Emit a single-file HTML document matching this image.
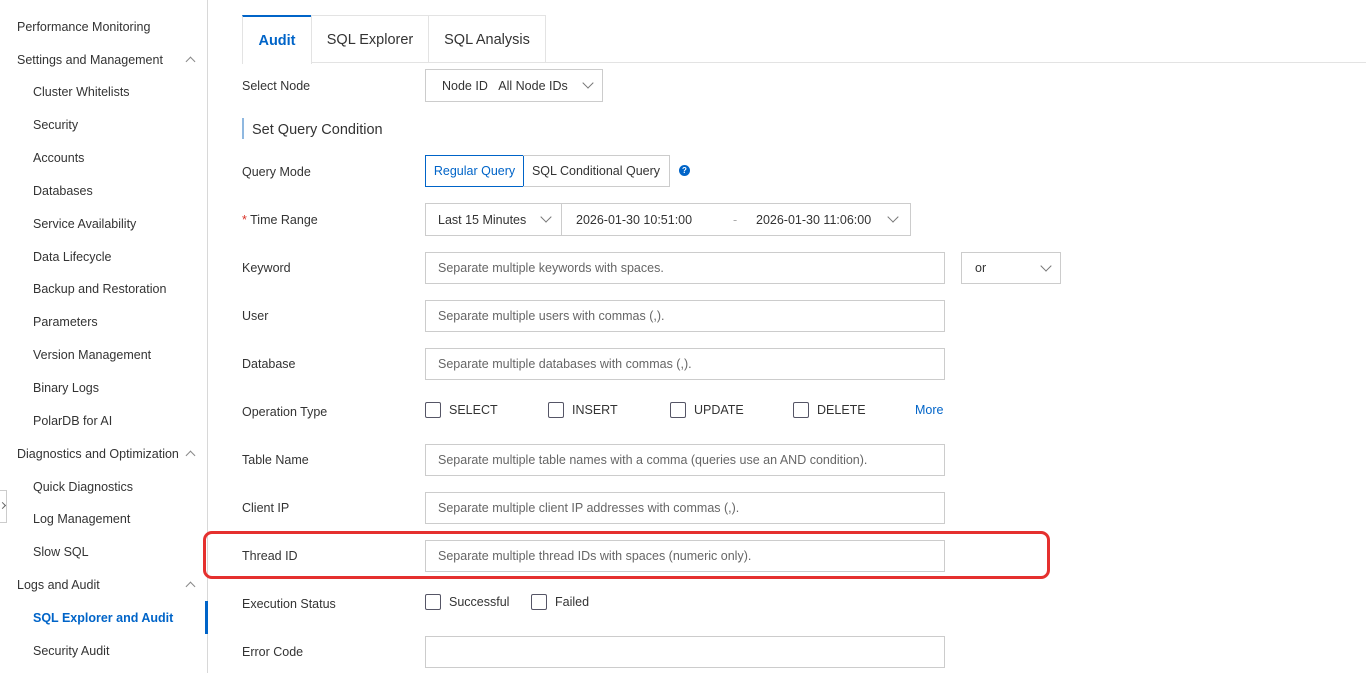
<!DOCTYPE html>
<html><head><meta charset="utf-8"><style>
*{box-sizing:border-box;margin:0;padding:0}
body{width:1366px;height:673px;overflow:hidden;background:#fff;font-family:"Liberation Sans",sans-serif;font-size:12.5px;color:#333;position:relative}
.a{position:absolute;white-space:nowrap}
.sb{position:absolute;left:0;top:0;width:208px;height:673px;border-right:1px solid #d8d8d8}
.it{position:absolute;line-height:16px;transform:translateY(-7px)}
.l1{left:17px}.l2{left:33px}
.car{position:absolute;left:187px;width:7px;height:7px;border-left:1px solid #888;border-top:1px solid #888;transform:rotate(45deg)}
.lab{position:absolute;left:242px;line-height:16px;transform:translateY(-7px)}
.inp{position:absolute;left:425px;width:520px;height:32px;border:1px solid #ccc;color:#666;padding-left:12px;line-height:31px}
.chev{display:inline-block;width:8px;height:8px;border-right:1px solid #777;border-bottom:1px solid #777;transform:rotate(45deg);position:absolute}
.cb{position:absolute;width:16px;height:16px;border:1px solid #556;border-radius:2px}
.tab{position:absolute;top:15px;height:48px;border:1px solid #e3e3e3;border-bottom:none;font-size:14.5px;line-height:48px;text-align:center;color:#333}
</style></head><body>
<div class="sb">
<div class="it l1" style="top:26px">Performance Monitoring</div>
<div class="it l1" style="top:59px">Settings and Management</div><div class="car" style="top:58px"></div>
<div class="it l2" style="top:91px">Cluster Whitelists</div>
<div class="it l2" style="top:124px">Security</div>
<div class="it l2" style="top:157px">Accounts</div>
<div class="it l2" style="top:190px">Databases</div>
<div class="it l2" style="top:223px">Service Availability</div>
<div class="it l2" style="top:256px">Data Lifecycle</div>
<div class="it l2" style="top:288px">Backup and Restoration</div>
<div class="it l2" style="top:321px">Parameters</div>
<div class="it l2" style="top:354px">Version Management</div>
<div class="it l2" style="top:387px">Binary Logs</div>
<div class="it l2" style="top:420px">PolarDB for AI</div>
<div class="it l1" style="top:453px">Diagnostics and Optimization</div><div class="car" style="top:452px"></div>
<div class="it l2" style="top:486px">Quick Diagnostics</div>
<div class="it l2" style="top:518px">Log Management</div>
<div class="it l2" style="top:551px">Slow SQL</div>
<div class="it l1" style="top:584px">Logs and Audit</div><div class="car" style="top:583px"></div>
<div class="it l2" style="top:617px;color:#0064c8;font-weight:bold">SQL Explorer and Audit</div>
<div class="it l2" style="top:650px">Security Audit</div>
<div style="position:absolute;left:205px;top:601px;width:3px;height:33px;background:#0064c8"></div>
</div>
<div style="position:absolute;left:-2px;top:490px;width:9px;height:33px;border:1px solid #ccc;background:#fff"></div>
<div style="position:absolute;left:0;top:503px;width:5px;height:5px;border-right:1px solid #666;border-top:1px solid #666;transform:rotate(45deg)"></div>

<div style="position:absolute;left:242px;top:62px;width:1124px;border-top:1px solid #e3e3e3"></div>
<div class="tab" style="left:242px;width:70px;border-top:2px solid #0064c8;color:#0064c8;font-weight:bold;background:#fff;height:49px">Audit</div>
<div class="tab" style="left:311px;width:118px">SQL Explorer</div>
<div class="tab" style="left:428px;width:118px">SQL Analysis</div>

<div class="lab" style="top:85px">Select Node</div>
<div class="a" style="left:425px;top:69px;width:178px;height:33px;border:1px solid #ccc;line-height:32px;padding-left:16px">Node ID &nbsp;&nbsp;All Node IDs<span class="chev" style="left:158px;top:9px"></span></div>

<div style="position:absolute;left:242px;top:118px;width:2px;height:21px;background:#8fb8e0"></div>
<div class="a" style="left:252px;top:122px;font-size:14.5px">Set Query Condition</div>

<div class="lab" style="top:171px">Query Mode</div>
<div class="a" style="left:425px;top:155px;width:99px;height:32px;border:1px solid #0064c8;color:#0064c8;line-height:31px;text-align:center">Regular Query</div>
<div class="a" style="left:523px;top:155px;width:147px;height:32px;border:1px solid #ccc;border-left:none;line-height:31px;text-align:center">SQL Conditional Query</div>
<div class="a" style="left:679px;top:165px;width:11px;height:11px;border-radius:50%;background:#0064c8;color:#fff;font-size:8px;line-height:11px;text-align:center;font-weight:bold">?</div>

<div class="lab" style="top:219px"><span style="color:#d93026">*</span> Time Range</div>
<div class="a" style="left:425px;top:203px;width:137px;height:33px;border:1px solid #ccc;line-height:32px;padding-left:12px">Last 15 Minutes<span class="chev" style="left:116px;top:9px"></span></div>
<div class="a" style="left:561px;top:203px;width:350px;height:33px;border:1px solid #ccc;line-height:32px;padding-left:14px;overflow:hidden">2026-01-30 10:51:00<span style="position:absolute;left:171px;color:#aaa">-</span><span style="position:absolute;left:194px">2026-01-30 11:06:00</span><span style="position:absolute;left:312px;top:0;width:37px;height:31px;background:#fff"></span><span class="chev" style="left:327px;top:9px"></span></div>

<div class="lab" style="top:267px">Keyword</div>
<div class="inp" style="top:252px">Separate multiple keywords with spaces.</div>
<div class="a" style="left:961px;top:252px;width:100px;height:32px;border:1px solid #ccc;line-height:31px;padding-left:13px">or<span class="chev" style="left:80px;top:9px"></span></div>

<div class="lab" style="top:315px">User</div>
<div class="inp" style="top:300px">Separate multiple users with commas (,).</div>
<div class="lab" style="top:363px">Database</div>
<div class="inp" style="top:348px">Separate multiple databases with commas (,).</div>

<div class="lab" style="top:411px">Operation Type</div>
<div class="cb" style="left:425px;top:402px"></div><div class="a" style="left:449px;top:403px">SELECT</div>
<div class="cb" style="left:548px;top:402px"></div><div class="a" style="left:572px;top:403px">INSERT</div>
<div class="cb" style="left:670px;top:402px"></div><div class="a" style="left:694px;top:403px">UPDATE</div>
<div class="cb" style="left:793px;top:402px"></div><div class="a" style="left:817px;top:403px">DELETE</div>
<div class="a" style="left:915px;top:403px;color:#0064c8">More</div>

<div class="lab" style="top:459px">Table Name</div>
<div class="inp" style="top:444px">Separate multiple table names with a comma (queries use an AND condition).</div>
<div class="lab" style="top:507px">Client IP</div>
<div class="inp" style="top:492px">Separate multiple client IP addresses with commas (,).</div>
<div class="lab" style="top:555px">Thread ID</div>
<div class="inp" style="top:540px">Separate multiple thread IDs with spaces (numeric only).</div>
<div style="position:absolute;left:203px;top:531px;width:847px;height:48px;border:3px solid #e5302e;border-radius:9px"></div>

<div class="lab" style="top:603px">Execution Status</div>
<div class="cb" style="left:425px;top:594px"></div><div class="a" style="left:449px;top:595px">Successful</div>
<div class="cb" style="left:531px;top:594px"></div><div class="a" style="left:555px;top:595px">Failed</div>

<div class="lab" style="top:651px">Error Code</div>
<div class="inp" style="top:636px"></div>
</body></html>
